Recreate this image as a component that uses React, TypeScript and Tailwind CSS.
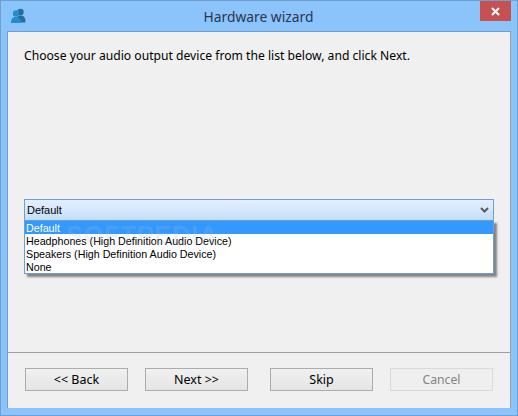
const font = { fontFamily: '"Noto Sans", Tahoma, sans-serif' }

function WizardButton({ label, disabled, className = '' }: { label: string; disabled?: boolean; className?: string }) {
  return (
    <button
      disabled={disabled}
      className={
        (disabled
          ? 'h-[23px] w-[103px] border border-[#d9d9d9] bg-[#efefef] text-[12.2px] leading-[20px] text-[#838383] '
          : 'h-[23px] w-[103px] border border-[#acacac] bg-gradient-to-b from-[#f0f0f0] to-[#e5e5e5] text-[12.5px] leading-[20px] text-black ') + className
      }
    >
      {label}
    </button>
  )
}

export default function App() {
  return (
    <div className="flex h-[416px] w-[518px] flex-col overflow-hidden border border-[#6f9fcf] bg-[#8ac4fa] text-black" style={font}>
      {/* Title bar */}
      <div className="flex h-[30px] shrink-0 items-start">
        <div className="ml-[9px] mt-[7px] w-[16px] shrink-0">
          <svg width="16" height="16" viewBox="0 0 16 16">
            <circle cx="10.5" cy="4" r="3.2" fill="#2a6a9c" />
            <path d="M6 14.5 C6 9 8 7.5 10.5 7.5 C13.5 7.5 15.5 9 15.5 14.5 Z" fill="#2a6a9c" />
            <circle cx="6" cy="5.5" r="3.2" fill="#1f8fd0" />
            <path d="M1 15 C1 10 3 9 6 9 C9 9 11 10 11 15 Z" fill="#1f8fd0" />
          </svg>
        </div>
        <div className="flex-1 pl-[11px] pt-[6px] text-center text-[13.8px] leading-[20px] text-[#2c3550]">Hardware wizard</div>
        <div className="flex h-[20px] w-[31px] shrink-0 items-center justify-center bg-[#c75050]">
          <svg width="9" height="9" viewBox="0 0 9 9">
            <path d="M1 1 L8 8 M8 1 L1 8" stroke="#fff" strokeWidth="2" />
          </svg>
        </div>
        <div className="w-[6px] shrink-0" />
      </div>

      {/* Client area */}
      <div className="mx-[6px] flex h-[377px] shrink-0 flex-col border-t border-l border-r border-t-[#6f9fcf] border-l-[#6f9fcf] border-r-[#9aa4ae] bg-[#f0f0f0]">
        <div className="relative h-[321px] shrink-0 border-b border-[#a0a0a0] px-[16px]">
          <p className="pt-[15px] text-[12.15px] leading-[17px]">Choose your audio output device from the list below, and click Next.</p>

          {/* Combo box */}
          <div className="mt-[135px] flex h-[22px] w-[470px] items-center justify-between border border-[#68a0dc] bg-gradient-to-b from-[#e4f0fd] to-[#c4defa] pl-[2px] pr-[4px] text-[11px]" style={{ fontFamily: '"Liberation Sans", sans-serif' }}>
            <span>Default</span>
            <svg width="9" height="7" viewBox="0 0 9 7">
              <path d="M1 1 L4.5 4.5 L8 1" fill="none" stroke="#5a5a5a" strokeWidth="2" />
            </svg>
          </div>

          {/* Open drop-down list */}
          <div className="absolute left-[16px] top-[188px] w-[470px] border border-[#6b9fd6] bg-white text-[10.7px] leading-[15px] shadow-[3px_3px_2px_rgba(0,0,0,0.45)]" style={{ fontFamily: '"Liberation Sans", sans-serif' }}>
            <div className="h-[13px] bg-[#3399ff] pl-[1px] text-white">Default</div>
            <div className="h-[13px] pl-[1px]">Headphones (High Definition Audio Device)</div>
            <div className="h-[13px] pl-[1px]">Speakers (High Definition Audio Device)</div>
            <div className="h-[13px] pl-[1px]">None</div>
            {/* faint watermark over the list */}
            <div className="pointer-events-none absolute left-[41px] top-[2px] text-[25px] font-bold leading-[24px] tracking-[1px] text-[#b8b8b8]/20">SOFTPEDIA</div>
          </div>
        </div>

        {/* Button row */}
        <div className="flex gap-[17px] pl-[17px] pt-[15px]">
          <WizardButton label="<< Back" />
          <WizardButton label="Next >>" />
          <WizardButton label="Skip" className="ml-[5px]" />
          <WizardButton label="Cancel" disabled />
        </div>
      </div>
    </div>
  )
}
